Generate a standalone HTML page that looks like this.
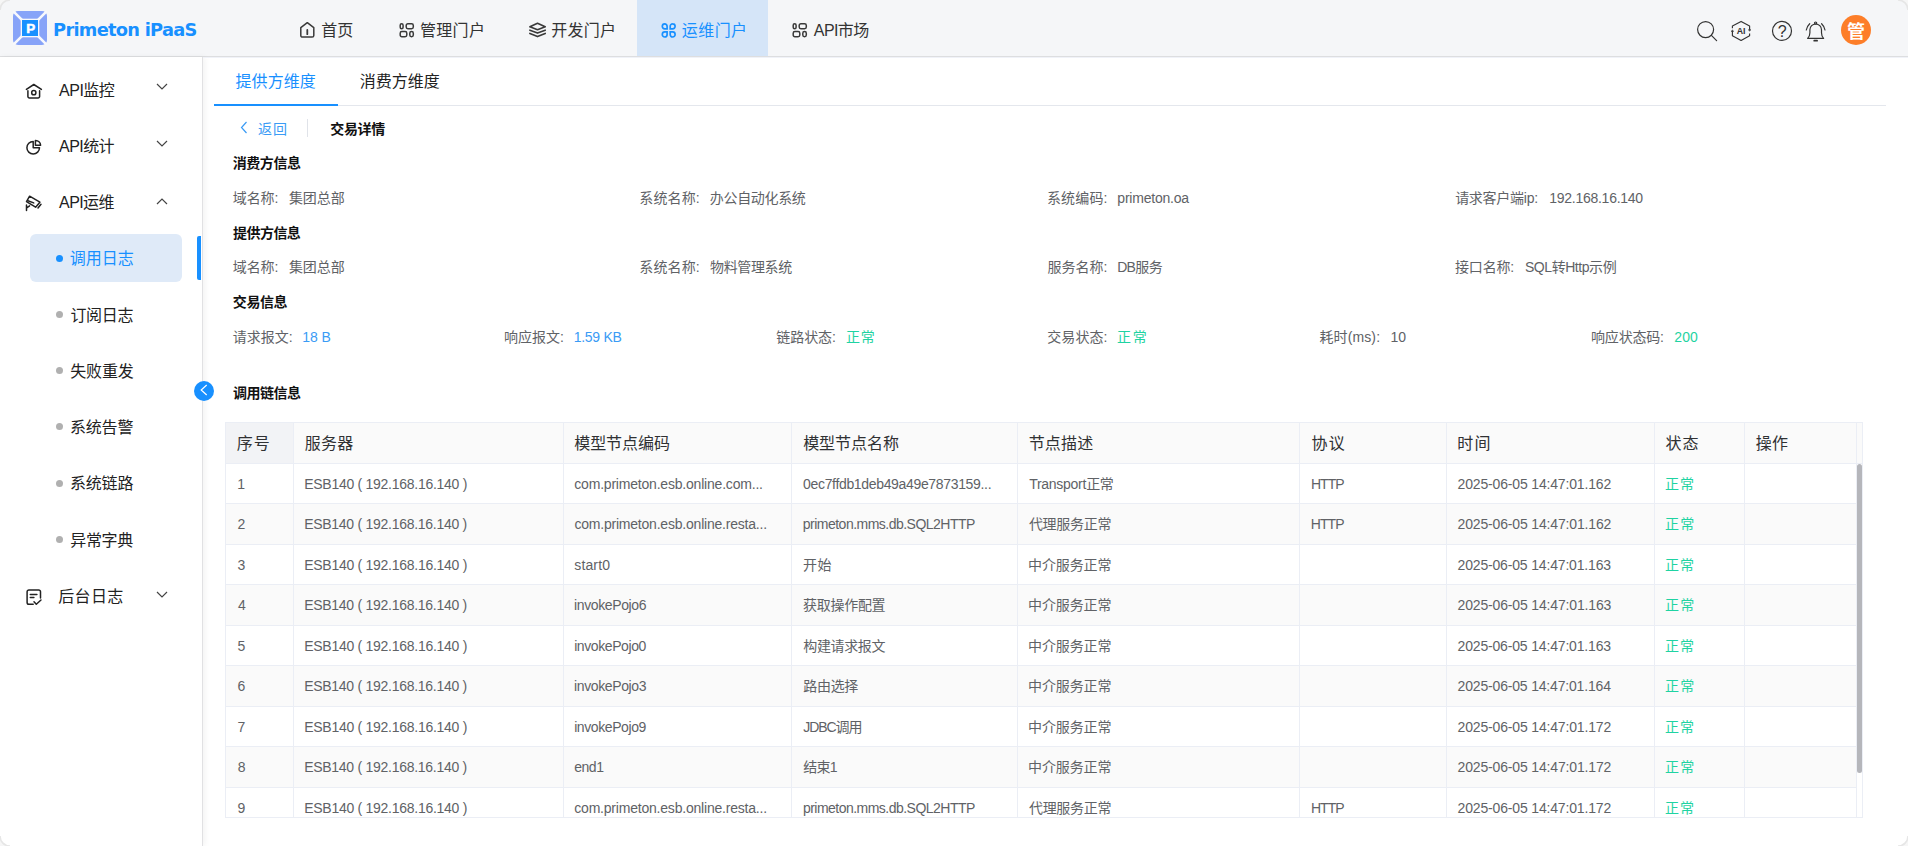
<!DOCTYPE html>
<html lang="zh-CN">
<head>
<meta charset="utf-8">
<title>Primeton iPaaS</title>
<style>
*{box-sizing:border-box;margin:0;padding:0}
html,body{width:1908px;height:846px;overflow:hidden;background:#fff}
body{font-family:"Liberation Sans","Noto Sans CJK SC",sans-serif;color:#333;position:relative;font-size:14px}
.abs{position:absolute;white-space:nowrap}
.t{position:absolute;white-space:nowrap;line-height:20px;font-size:14px}
#hdr{position:absolute;left:0;top:0;width:1908px;height:57px;background:#f5f6f8;border-bottom:1px solid #dddee0}
#brand{font-family:"DejaVu Sans","Liberation Sans",sans-serif;font-size:17.8px;line-height:24px;font-weight:bold;color:#1890ff}
.navbg{position:absolute;left:637px;top:0;width:131px;height:56px;background:#d5e5f8}
.nv{font-size:16px;line-height:24px;color:#333}
.on{color:#1890ff}
#side{position:absolute;left:0;top:57px;width:203px;height:789px;background:#fff;border-right:1px solid #e1e1e3;box-shadow:2px 0 6px rgba(0,0,0,0.05)}
.m{font-size:16px;line-height:24px;color:#222}
.dot{position:absolute;left:56px;width:7px;height:7px;border-radius:50%;background:#b0b0b0}
.ico{position:absolute}
.tab{font-size:16px;line-height:24px;color:#222}
.h{font-weight:bold;color:#111}
.l{color:#606266}
#tbl{position:absolute;left:225px;top:422px;width:1638px;height:396px;border:1px solid #ebeef5;background:#fff;overflow:hidden}
.hl{position:absolute;left:0;width:1631px;height:1px;background:#ebeef5}
.vl{position:absolute;top:0;width:1px;height:396px;background:#ebeef5}
.rb{position:absolute;left:0;width:1631px;background:#fafafa}
.th{font-size:16px;line-height:24px;color:#303133}
.td{color:#606266}
.b{color:#3a9bf5}.g{color:#1fd3a2}.on{color:#1890ff}

</style>
</head>
<body>
<div id="hdr"><div class="navbg"></div>
<svg class="abs" style="left:13px;top:11px" width="34" height="34" viewBox="0 0 34 34">
<rect x="0" y="0" width="34" height="34" rx="5" fill="#87a3f8"/>
<path d="M0 0L34 34M34 0L0 34" stroke="#f7f8fc" stroke-width="2.6"/>
<rect x="7.7" y="7.7" width="18.6" height="18.6" fill="#f7f8fc"/>
<rect x="9" y="9" width="16" height="16" fill="#1890ff"/>
<text x="17.8" y="22.4" text-anchor="middle" font-family="Liberation Sans, sans-serif" font-weight="bold" font-size="13.4" fill="#fff" stroke="#fff" stroke-width="0.5">P</text>
</svg>
<svg class="abs" style="left:299px;top:21px" width="17" height="18" viewBox="0 0 17 18" fill="none" stroke="#3a3a3a" stroke-width="1.500" stroke-linejoin="round" stroke-linecap="round"><path d="M1.800 6.700L8.300 1.700l6.500 5v7.700a1.700 1.700 0 0 1-1.700 1.700H3.500a1.700 1.700 0 0 1-1.700-1.700z"/><path d="M8.300 9v4.200" stroke-width="1.800"/></svg>
<svg class="abs" style="left:398px;top:22px" width="17" height="17" viewBox="0 0 17 17" fill="none" stroke="#3a3a3a" stroke-width="1.500"><rect x="2.200" y="1.800" width="2.900" height="5" rx="1.450"/><rect x="8.200" y="1.800" width="7.100" height="5" rx="1.700"/><rect x="2.200" y="9.600" width="6.600" height="5.200" rx="1.700"/><rect x="11.800" y="9.600" width="3.500" height="5.200" rx="1.700"/></svg>
<svg class="abs" style="left:529px;top:21px" width="18" height="18" viewBox="0 0 18 18" fill="none" stroke="#3a3a3a" stroke-width="1.600" stroke-linejoin="round" stroke-linecap="round"><path d="M8.500 2.200L16.200 5.800L8.500 8.800L0.900 5.800z"/><path d="M0.900 9.200L8.500 12.100L16.200 9.200"/><path d="M0.900 12.400L8.500 15.600L16.200 12.400"/></svg>
<svg class="abs" style="left:660px;top:22px" width="17" height="17" viewBox="0 0 17 17" fill="none" stroke="#1890ff" stroke-width="1.700" stroke-linejoin="miter"><path d="M7.100 6.900H4.700A2.400 2.550 0 0 1 4.700 1.800A2.400 2.550 0 0 1 7.100 4.350Z"/><path d="M10.200 6.900H12.700A2.400 2.550 0 0 0 12.700 1.800A2.400 2.550 0 0 0 10.200 4.350Z"/><path d="M7.100 9.900H4.700A2.400 2.550 0 0 0 4.700 15A2.400 2.550 0 0 0 7.100 12.450Z"/><path d="M10.200 9.900H12.700A2.400 2.550 0 0 1 12.700 15A2.400 2.550 0 0 1 10.200 12.450Z"/></svg>
<svg class="abs" style="left:791px;top:22px" width="17" height="17" viewBox="0 0 17 17" fill="none" stroke="#3a3a3a" stroke-width="1.500"><rect x="2.200" y="1.800" width="2.900" height="5" rx="1.450"/><rect x="8.200" y="1.800" width="7.100" height="5" rx="1.700"/><rect x="2.200" y="9.600" width="6.600" height="5.200" rx="1.700"/><rect x="11.800" y="9.600" width="3.500" height="5.200" rx="1.700"/></svg>
<svg class="abs" style="left:1694px;top:18px" width="26" height="26" viewBox="0 0 26 26" fill="none" stroke="#333" stroke-width="1.200" stroke-linecap="round"><circle cx="11.600" cy="11.600" r="8"/><path d="M17.400 17.400l5.200 5.200"/></svg>
<svg class="abs" style="left:1729px;top:19px" width="24" height="24" viewBox="0 0 24 24" fill="none" stroke="#333" stroke-width="1.150" stroke-linejoin="round" stroke-linecap="butt"><path d="M3.400 9.300V7L12.100 2.400L20.600 7v3"/><path d="M20.600 14.400v2.300L12.100 21.500L3.400 16.700v-3.600"/><path d="M3.400 11l1.250 1.200l-1.250 1.100l-1.250-1.100z" fill="#333" stroke-width="0.500"/><path d="M20.600 12.100l-1.250-1.200l1.250-1.100l1.250 1.100z" fill="#333" stroke-width="0.500"/><text x="12.100" y="14.500" text-anchor="middle" font-family="Liberation Sans, sans-serif" font-weight="bold" font-size="8.800" fill="#333" stroke="none">AI</text></svg>
<svg class="abs" style="left:1770px;top:19px" width="24" height="24" viewBox="0 0 24 24" fill="none" stroke="#333" stroke-width="1.200"><circle cx="12" cy="11.950" r="9.500"/><text x="12.100" y="17.900" text-anchor="middle" font-family="Liberation Sans, sans-serif" font-size="16" fill="#333" stroke="none">?</text></svg>
<svg class="abs" style="left:1803px;top:19px" width="26" height="26" viewBox="0 0 26 26" fill="none" stroke="#333" stroke-width="1.200" stroke-linecap="round" stroke-linejoin="round"><path d="M4.600 19.400h16c-1.600-1.500-2.100-3.200-2.100-5.600v-3a5.800 5.800 0 0 0-11.600 0v3c0 2.400-.500 4.100-2.300 5.600z"/><circle cx="12.600" cy="4.100" r="1.100"/><path d="M11.200 21.700h2.900" stroke-width="1.700"/><path d="M6.700 4.700c-1.900 1.800-3 3.900-3.400 6.300M18.600 4.700c1.900 1.800 3 3.900 3.400 6.300"/></svg>
<div class="abs" style="left:1841px;top:15px;width:30px;height:30px;border-radius:50%;background:#fd7e29;color:#fff;font-weight:bold;font-size:18px;line-height:34px;text-align:center">管</div>
</div>
<div id="side">
<div class="abs" style="left:30px;top:177px;width:152px;height:48px;border-radius:6px;background:#dfeaf8"></div>
<div class="abs" style="left:197px;top:179px;width:4px;height:44px;border-radius:2px 0 0 2px;background:#1890ff"></div>
<svg class="ico" style="left:24px;top:25px" width="20" height="20" viewBox="0 0 20 20" fill="none" stroke="#222" stroke-width="1.500" stroke-linejoin="round" stroke-linecap="round"><path d="M2.400 7.400L9.800 2.500l7.600 4.900"/><path d="M3.900 8.700v5.700a1.500 1.500 0 0 0 1.500 1.500h8.700a1.500 1.500 0 0 0 1.500-1.500V8.700"/><circle cx="9.800" cy="10.700" r="2.100"/></svg>

<svg class="ico" style="left:156px;top:26.300px" width="12" height="8" viewBox="0 0 12 8" fill="none" stroke="#444" stroke-width="1.200"><path d="M1 1l5 5l5-5"/></svg>
<svg class="ico" style="left:24px;top:81px" width="20" height="20" viewBox="0 0 20 20" fill="none" stroke="#222" stroke-width="1.500" stroke-linejoin="round"><path d="M9.200 3.400A6.300 6.300 0 1 0 15.500 9.700H9.200z"/><path d="M11.400 2.400a5 5 0 0 1 5.200 4.800h-5.200z"/></svg>

<svg class="ico" style="left:156px;top:83px" width="12" height="8" viewBox="0 0 12 8" fill="none" stroke="#444" stroke-width="1.200"><path d="M1 1l5 5l5-5"/></svg>
<svg class="ico" style="left:23px;top:137px" width="22" height="20" viewBox="0 0 22 20" fill="none" stroke="#222" stroke-width="1.500" stroke-linejoin="round" stroke-linecap="round"><path d="M6.600 2.200l10.300 6l-4.300 5l-9.100-5.600z"/><path d="M4.900 6.700l5.800 2.200"/><path d="M18 10.300l-3 3.600"/><path d="M3.500 11v5.500M3.700 13.900l2.900-2"/></svg>

<svg class="ico" style="left:156px;top:140px" width="12" height="8" viewBox="0 0 12 8" fill="none" stroke="#444" stroke-width="1.200"><path d="M1 7l5-5l5 5"/></svg>
<div class="dot" style="top:198px;background:#1890ff"></div>
<div class="dot" style="top:254px"></div>
<div class="dot" style="top:310px"></div>
<div class="dot" style="top:366px"></div>
<div class="dot" style="top:423px"></div>
<div class="dot" style="top:479px"></div>
<svg class="ico" style="left:24px;top:531px" width="20" height="20" viewBox="0 0 20 20" fill="none" stroke="#222" stroke-width="1.500" stroke-linejoin="round" stroke-linecap="round"><path d="M16.500 9.900V3.700a1.800 1.800 0 0 0-1.800-1.800H4.900a1.800 1.800 0 0 0-1.800 1.800v10.700a1.800 1.800 0 0 0 1.800 1.800h4.300"/><path d="M6.300 6.400h6.600M6.300 9.400h3.600"/><path d="M10 13.700l2.300 2.500l4.700-4.200"/></svg>

<svg class="ico" style="left:156px;top:533.500px" width="12" height="8" viewBox="0 0 12 8" fill="none" stroke="#444" stroke-width="1.200"><path d="M1 1l5 5l5-5"/></svg>
</div>
<div class="abs" style="left:194px;top:381px;width:20px;height:20px;border-radius:50%;background:#1890ff"><svg style="position:absolute;left:5.500px;top:2.700px" width="9" height="13" viewBox="0 0 9 13" fill="none" stroke="#fff" stroke-width="1.200" stroke-linecap="butt" stroke-linejoin="miter"><path d="M6.700 1L1.200 6l5.500 5"/></svg></div>

<div class="abs" style="left:214px;top:105px;width:1672px;height:1px;background:#e4e7ed"></div>
<div class="abs" style="left:214px;top:104px;width:124px;height:2px;background:#1890ff"></div>
<svg class="abs" style="left:240px;top:120.5px" width="8" height="13" viewBox="0 0 8 13" fill="none" stroke="#3a9bf5" stroke-width="1.2"><path d="M6.5 1L1.5 6.500l5 5.500"/></svg>
<div class="abs" style="left:307px;top:119px;width:1px;height:18px;background:#e0e3e9"></div>
<div id="tbl"><div class="rb" style="top:0;height:40px;width:1636px"></div><div class="abs" style="left:0;top:0;width:67px;height:40px;background:#f2f3f6"></div><div class="rb" style="top:81px;height:40px"></div><div class="rb" style="top:162px;height:40px"></div><div class="rb" style="top:243px;height:40px"></div><div class="rb" style="top:324px;height:40px"></div><div class="hl" style="top:40px;width:1636px"></div><div class="hl" style="top:80px"></div><div class="hl" style="top:121px"></div><div class="hl" style="top:161px"></div><div class="hl" style="top:202px"></div><div class="hl" style="top:242px"></div><div class="hl" style="top:283px"></div><div class="hl" style="top:323px"></div><div class="hl" style="top:364px"></div><div class="vl" style="left:67px"></div><div class="vl" style="left:337px"></div><div class="vl" style="left:565px"></div><div class="vl" style="left:791px"></div><div class="vl" style="left:1073px"></div><div class="vl" style="left:1220px"></div><div class="vl" style="left:1428px"></div><div class="vl" style="left:1518px"></div><div class="vl" style="left:1630px"></div><div class="abs" style="left:1631px;top:41px;width:5px;height:309px;border-radius:3px;background:#b5b6bb"></div></div>
<div class="t " id="brand" style="left:53.08px;top:18px;letter-spacing:-0.710px">Primeton iPaaS</div>
<div class="t nv" id="t1" style="left:321.20px;top:19px;letter-spacing:0.066px">首页</div>
<div class="t nv" id="t2" style="left:419.97px;top:19px;letter-spacing:0.328px">管理门户</div>
<div class="t nv" id="t3" style="left:551.32px;top:19px;letter-spacing:0.253px">开发门户</div>
<div class="t nv on" id="t4" style="left:681.74px;top:19px;letter-spacing:0.460px">运维门户</div>
<div class="t nv" id="t5" style="left:813.84px;top:19px;letter-spacing:-0.602px">API市场</div>
<div class="t m" id="t6" style="left:59.12px;top:79px;letter-spacing:-0.533px">API监控</div>
<div class="t m" id="t7" style="left:59.12px;top:135px;letter-spacing:-0.581px">API统计</div>
<div class="t m" id="t8" style="left:59.12px;top:191px;letter-spacing:-0.595px">API运维</div>
<div class="t m on" id="t9" style="left:69.68px;top:247px;letter-spacing:-0.009px">调用日志</div>
<div class="t m" id="t10" style="left:70.43px;top:304px;letter-spacing:-0.297px">订阅日志</div>
<div class="t m" id="t11" style="left:70.20px;top:360px;letter-spacing:-0.125px">失败重发</div>
<div class="t m" id="t12" style="left:69.89px;top:416px;letter-spacing:-0.147px">系统告警</div>
<div class="t m" id="t13" style="left:69.89px;top:472px;letter-spacing:-0.160px">系统链路</div>
<div class="t m" id="t14" style="left:70.20px;top:529px;letter-spacing:-0.300px">异常字典</div>
<div class="t m" id="t15" style="left:58.20px;top:585px;letter-spacing:0.346px">后台日志</div>
<div class="t tab on" id="t16" style="left:235.42px;top:70px;letter-spacing:0.111px">提供方维度</div>
<div class="t tab" id="t17" style="left:359.78px;top:70px;letter-spacing:-0.024px">消费方维度</div>
<div class="t l b" id="t18" style="left:258.05px;top:119px;letter-spacing:1.020px">返回</div>
<div class="t h" id="t19" style="left:330.20px;top:119px;letter-spacing:-0.300px">交易详情</div>
<div class="t h" id="t20" style="left:232.68px;top:153px;letter-spacing:-0.420px">消费方信息</div>
<div class="t l" id="t21" style="left:232.69px;top:188px;letter-spacing:-0.033px">域名称:</div>
<div class="t l" id="t22" style="left:288.89px;top:188px;letter-spacing:-0.048px">集团总部</div>
<div class="t l" id="t23" style="left:639.33px;top:188px;letter-spacing:0.114px">系统名称:</div>
<div class="t l" id="t24" style="left:709.80px;top:188px;letter-spacing:-0.321px">办公自动化系统</div>
<div class="t l" id="t25" style="left:1046.88px;top:188px;letter-spacing:0.168px">系统编码:</div>
<div class="t l" id="t26" style="left:1117.36px;top:188px;letter-spacing:-0.219px">primeton.oa</div>
<div class="t l" id="t27" style="left:1455.15px;top:188px;letter-spacing:-0.268px">请求客户端ip:</div>
<div class="t l" id="t28" style="left:1549.21px;top:188px;letter-spacing:-0.262px">192.168.16.140</div>
<div class="t h" id="t29" style="left:233.07px;top:223px;letter-spacing:-0.556px">提供方信息</div>
<div class="t l" id="t30" style="left:232.69px;top:257px;letter-spacing:-0.033px">域名称:</div>
<div class="t l" id="t31" style="left:288.89px;top:257px;letter-spacing:-0.048px">集团总部</div>
<div class="t l" id="t32" style="left:639.33px;top:257px;letter-spacing:0.114px">系统名称:</div>
<div class="t l" id="t33" style="left:710.02px;top:257px;letter-spacing:-0.368px">物料管理系统</div>
<div class="t l" id="t34" style="left:1047.43px;top:257px;letter-spacing:0.045px">服务名称:</div>
<div class="t l" id="t35" style="left:1117.14px;top:257px;letter-spacing:-0.623px">DB服务</div>
<div class="t l" id="t36" style="left:1455.07px;top:257px;letter-spacing:-0.216px">接口名称:</div>
<div class="t l" id="t37" style="left:1524.94px;top:257px;letter-spacing:-0.442px">SQL转Http示例</div>
<div class="t h" id="t38" style="left:232.84px;top:292px;letter-spacing:-0.434px">交易信息</div>
<div class="t l" id="t39" style="left:232.71px;top:327px">请求报文:</div>
<div class="t l b" id="t40" style="left:302.31px;top:327px;letter-spacing:-0.047px">18 B</div>
<div class="t l" id="t41" style="left:504.06px;top:327px">响应报文:</div>
<div class="t l b" id="t42" style="left:573.71px;top:327px;letter-spacing:-0.271px">1.59 KB</div>
<div class="t l" id="t43" style="left:776.18px;top:327px;letter-spacing:-0.019px">链路状态:</div>
<div class="t l g" id="t44" style="left:845.89px;top:327px;letter-spacing:0.878px">正常</div>
<div class="t l" id="t45" style="left:1047.29px;top:327px;letter-spacing:0.076px">交易状态:</div>
<div class="t l g" id="t46" style="left:1116.89px;top:327px;letter-spacing:1.941px">正常</div>
<div class="t l" id="t47" style="left:1319.39px;top:327px;letter-spacing:0.132px">耗时(ms):</div>
<div class="t l" id="t48" style="left:1390.53px;top:327px;letter-spacing:-0.034px">10</div>
<div class="t l" id="t49" style="left:1591.06px;top:327px;letter-spacing:-0.186px">响应状态码:</div>
<div class="t l g" id="t50" style="left:1674.34px;top:327px;letter-spacing:0.067px">200</div>
<div class="t h" id="t51" style="left:233.10px;top:383px;letter-spacing:-0.503px">调用链信息</div>
<div class="t th" id="t52" style="left:236.63px;top:432px;letter-spacing:1.152px">序号</div>
<div class="t th" id="t53" style="left:304.68px;top:432px;letter-spacing:0.275px">服务器</div>
<div class="t th" id="t54" style="left:574.19px;top:432px;letter-spacing:-0.044px">模型节点编码</div>
<div class="t th" id="t55" style="left:803.15px;top:432px;letter-spacing:-0.027px">模型节点名称</div>
<div class="t th" id="t56" style="left:1028.66px;top:432px;letter-spacing:0.202px">节点描述</div>
<div class="t th" id="t57" style="left:1311.45px;top:432px;letter-spacing:1.271px">协议</div>
<div class="t th" id="t58" style="left:1457.22px;top:432px;letter-spacing:1.360px">时间</div>
<div class="t th" id="t59" style="left:1665.44px;top:432px;letter-spacing:1.071px">状态</div>
<div class="t th" id="t60" style="left:1755.79px;top:432px;letter-spacing:0.177px">操作</div>
<div class="t td" id="t61" style="left:237.21px;top:474px">1</div>
<div class="t td" id="t62" style="left:304.21px;top:474px;letter-spacing:-0.272px">ESB140 ( 192.168.16.140 )</div>
<div class="t td" id="t63" style="left:574.29px;top:474px;letter-spacing:-0.201px">com.primeton.esb.online.com...</div>
<div class="t td" id="t64" style="left:803.08px;top:474px;letter-spacing:-0.335px">0ec7ffdb1deb49a49e7873159...</div>
<div class="t td" id="t65" style="left:1029.15px;top:474px;letter-spacing:-0.267px">Transport正常</div>
<div class="t td" id="t66" style="left:1310.99px;top:474px;letter-spacing:-1.008px">HTTP</div>
<div class="t td" id="t67" style="left:1457.52px;top:474px;letter-spacing:-0.160px">2025-06-05 14:47:01.162</div>
<div class="t td g" id="t68" style="left:1664.89px;top:474px;letter-spacing:1.193px">正常</div>
<div class="t td" id="t69" style="left:237.62px;top:514px">2</div>
<div class="t td" id="t70" style="left:304.16px;top:514px;letter-spacing:-0.276px">ESB140 ( 192.168.16.140 )</div>
<div class="t td" id="t71" style="left:574.38px;top:514px;letter-spacing:-0.209px">com.primeton.esb.online.resta...</div>
<div class="t td" id="t72" style="left:802.84px;top:514px;letter-spacing:-0.518px">primeton.mms.db.SQL2HTTP</div>
<div class="t td" id="t73" style="left:1028.88px;top:514px;letter-spacing:-0.273px">代理服务正常</div>
<div class="t td" id="t74" style="left:1310.76px;top:514px;letter-spacing:-0.921px">HTTP</div>
<div class="t td" id="t75" style="left:1457.62px;top:514px;letter-spacing:-0.161px">2025-06-05 14:47:01.162</div>
<div class="t td g" id="t76" style="left:1664.96px;top:514px;letter-spacing:1.180px">正常</div>
<div class="t td" id="t77" style="left:237.62px;top:555px">3</div>
<div class="t td" id="t78" style="left:304.21px;top:555px;letter-spacing:-0.272px">ESB140 ( 192.168.16.140 )</div>
<div class="t td" id="t79" style="left:574.26px;top:555px;letter-spacing:0.137px">start0</div>
<div class="t td" id="t80" style="left:803.02px;top:555px;letter-spacing:0.372px">开始</div>
<div class="t td" id="t81" style="left:1028.03px;top:555px;letter-spacing:-0.100px">中介服务正常</div>
<div class="t td" id="t82" style="left:1457.52px;top:555px;letter-spacing:-0.166px">2025-06-05 14:47:01.163</div>
<div class="t td g" id="t83" style="left:1664.89px;top:555px;letter-spacing:1.193px">正常</div>
<div class="t td" id="t84" style="left:238.03px;top:595px">4</div>
<div class="t td" id="t85" style="left:304.16px;top:595px;letter-spacing:-0.276px">ESB140 ( 192.168.16.140 )</div>
<div class="t td" id="t86" style="left:574.04px;top:595px;letter-spacing:-0.387px">invokePojo6</div>
<div class="t td" id="t87" style="left:803.12px;top:595px;letter-spacing:-0.303px">获取操作配置</div>
<div class="t td" id="t88" style="left:1028.07px;top:595px;letter-spacing:-0.121px">中介服务正常</div>
<div class="t td" id="t89" style="left:1457.62px;top:595px;letter-spacing:-0.162px">2025-06-05 14:47:01.163</div>
<div class="t td g" id="t90" style="left:1664.96px;top:595px;letter-spacing:1.180px">正常</div>
<div class="t td" id="t91" style="left:237.54px;top:636px">5</div>
<div class="t td" id="t92" style="left:304.21px;top:636px;letter-spacing:-0.272px">ESB140 ( 192.168.16.140 )</div>
<div class="t td" id="t93" style="left:574.16px;top:636px;letter-spacing:-0.410px">invokePojo0</div>
<div class="t td" id="t94" style="left:803.26px;top:636px;letter-spacing:-0.354px">构建请求报文</div>
<div class="t td" id="t95" style="left:1028.03px;top:636px;letter-spacing:-0.100px">中介服务正常</div>
<div class="t td" id="t96" style="left:1457.52px;top:636px;letter-spacing:-0.166px">2025-06-05 14:47:01.163</div>
<div class="t td g" id="t97" style="left:1664.89px;top:636px;letter-spacing:1.193px">正常</div>
<div class="t td" id="t98" style="left:237.51px;top:676px">6</div>
<div class="t td" id="t99" style="left:304.16px;top:676px;letter-spacing:-0.276px">ESB140 ( 192.168.16.140 )</div>
<div class="t td" id="t100" style="left:574.04px;top:676px;letter-spacing:-0.387px">invokePojo3</div>
<div class="t td" id="t101" style="left:803.30px;top:676px;letter-spacing:-0.319px">路由选择</div>
<div class="t td" id="t102" style="left:1028.07px;top:676px;letter-spacing:-0.121px">中介服务正常</div>
<div class="t td" id="t103" style="left:1457.62px;top:676px;letter-spacing:-0.178px">2025-06-05 14:47:01.164</div>
<div class="t td g" id="t104" style="left:1664.96px;top:676px;letter-spacing:1.180px">正常</div>
<div class="t td" id="t105" style="left:237.51px;top:717px">7</div>
<div class="t td" id="t106" style="left:304.21px;top:717px;letter-spacing:-0.272px">ESB140 ( 192.168.16.140 )</div>
<div class="t td" id="t107" style="left:574.16px;top:717px;letter-spacing:-0.409px">invokePojo9</div>
<div class="t td" id="t108" style="left:803.22px;top:717px;letter-spacing:-1.057px">JDBC调用</div>
<div class="t td" id="t109" style="left:1028.03px;top:717px;letter-spacing:-0.100px">中介服务正常</div>
<div class="t td" id="t110" style="left:1457.52px;top:717px;letter-spacing:-0.160px">2025-06-05 14:47:01.172</div>
<div class="t td g" id="t111" style="left:1664.89px;top:717px;letter-spacing:1.193px">正常</div>
<div class="t td" id="t112" style="left:237.63px;top:757px">8</div>
<div class="t td" id="t113" style="left:304.16px;top:757px;letter-spacing:-0.276px">ESB140 ( 192.168.16.140 )</div>
<div class="t td" id="t114" style="left:574.35px;top:757px;letter-spacing:-0.521px">end1</div>
<div class="t td" id="t115" style="left:803.28px;top:757px;letter-spacing:-0.742px">结束1</div>
<div class="t td" id="t116" style="left:1028.07px;top:757px;letter-spacing:-0.121px">中介服务正常</div>
<div class="t td" id="t117" style="left:1457.62px;top:757px;letter-spacing:-0.161px">2025-06-05 14:47:01.172</div>
<div class="t td g" id="t118" style="left:1664.96px;top:757px;letter-spacing:1.180px">正常</div>
<div class="t td" id="t119" style="left:237.58px;top:798px">9</div>
<div class="t td" id="t120" style="left:304.21px;top:798px;letter-spacing:-0.272px">ESB140 ( 192.168.16.140 )</div>
<div class="t td" id="t121" style="left:574.29px;top:798px;letter-spacing:-0.207px">com.primeton.esb.online.resta...</div>
<div class="t td" id="t122" style="left:802.90px;top:798px;letter-spacing:-0.519px">primeton.mms.db.SQL2HTTP</div>
<div class="t td" id="t123" style="left:1028.96px;top:798px;letter-spacing:-0.307px">代理服务正常</div>
<div class="t td" id="t124" style="left:1310.99px;top:798px;letter-spacing:-1.008px">HTTP</div>
<div class="t td" id="t125" style="left:1457.52px;top:798px;letter-spacing:-0.160px">2025-06-05 14:47:01.172</div>
<div class="t td g" id="t126" style="left:1664.89px;top:798px;letter-spacing:1.193px">正常</div>
<div class="abs" style="left:203px;top:57px;width:1705px;height:1px;background:#f0f2f8"></div>
<svg class="abs" style="left:0;top:0" width="1908" height="846" viewBox="0 0 1908 846" fill="#f6f6f6" stroke="none"><path d="M0 0h10A10 10 0 0 0 0 10z"/><path d="M1908 0h-10A10 10 0 0 1 1908 10z"/><path d="M0 846h10A10 10 0 0 1 0 836z"/><path d="M1908 846h-10A10 10 0 0 0 1908 836z"/><g fill="none" stroke="#e6e6e6" stroke-width="1.600"><path d="M10 0A10 10 0 0 0 0 10"/><path d="M1898 0A10 10 0 0 1 1908 10"/><path d="M10 846A10 10 0 0 1 0 836"/><path d="M1898 846A10 10 0 0 0 1908 836"/></g></svg>
</body>
</html>
